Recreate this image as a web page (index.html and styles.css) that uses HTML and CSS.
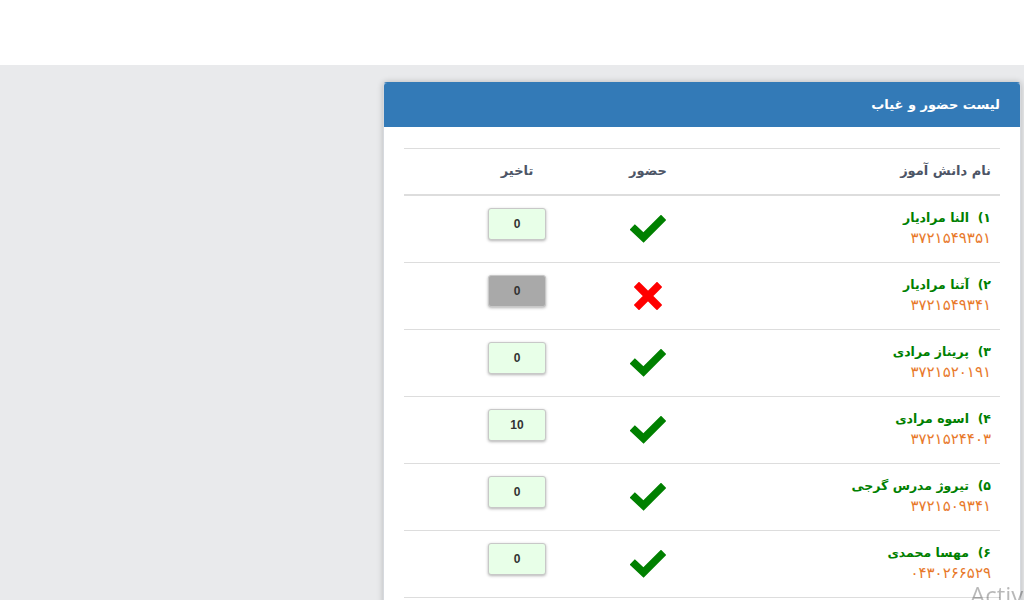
FILE: index.html
```html
<!DOCTYPE html>
<html lang="fa" dir="rtl">
<head>
<meta charset="UTF-8">
<meta name="viewport" content="width=device-width, initial-scale=1.0">
<title>لیست حضور و غیاب</title>
<link rel="stylesheet" href="styles.css">
</head>
<body>

<div class="topbar"></div>

<div class="main">
    <div class="panel">
        <div class="panel-heading">لیست حضور و غیاب</div>
        <div class="panel-body">
            <div class="table">
                <div class="row head">
                    <div class="cell name">نام دانش آموز</div>
                    <div class="cell mid">حضور</div>
                    <div class="cell mid">تاخیر</div>
                    <div class="cell"></div>
                </div>

                <div class="row">
                    <div class="cell name">
                        <div class="student">۱)&nbsp; النا مرادیار</div>
                        <div class="code">۳۷۲۱۵۴۹۳۵۱</div>
                    </div>
                    <div class="cell mid icon"><svg class="ok" viewBox="0 0 36 28"><polyline points="5,14.5 13.5,22.5 31,5"/></svg></div>
                    <div class="cell mid"><input class="delay" type="text" value="0" readonly></div>
                    <div class="cell"></div>
                </div>

                <div class="row">
                    <div class="cell name">
                        <div class="student">۲)&nbsp; آتنا مرادیار</div>
                        <div class="code">۳۷۲۱۵۴۹۳۴۱</div>
                    </div>
                    <div class="cell mid icon"><svg class="no" viewBox="0 0 28 28"><path d="M5 5L23 23M23 5L5 23"/></svg></div>
                    <div class="cell mid"><input class="delay off" type="text" value="0" disabled></div>
                    <div class="cell"></div>
                </div>

                <div class="row">
                    <div class="cell name">
                        <div class="student">۳)&nbsp; پریناز مرادی</div>
                        <div class="code">۳۷۲۱۵۲۰۱۹۱</div>
                    </div>
                    <div class="cell mid icon"><svg class="ok" viewBox="0 0 36 28"><polyline points="5,14.5 13.5,22.5 31,5"/></svg></div>
                    <div class="cell mid"><input class="delay" type="text" value="0" readonly></div>
                    <div class="cell"></div>
                </div>

                <div class="row">
                    <div class="cell name">
                        <div class="student">۴)&nbsp; اسوه مرادی</div>
                        <div class="code">۳۷۲۱۵۲۴۴۰۳</div>
                    </div>
                    <div class="cell mid icon"><svg class="ok" viewBox="0 0 36 28"><polyline points="5,14.5 13.5,22.5 31,5"/></svg></div>
                    <div class="cell mid"><input class="delay" type="text" value="10" readonly></div>
                    <div class="cell"></div>
                </div>

                <div class="row">
                    <div class="cell name">
                        <div class="student">۵)&nbsp; تیروژ مدرس گرجی</div>
                        <div class="code">۳۷۲۱۵۰۹۳۴۱</div>
                    </div>
                    <div class="cell mid icon"><svg class="ok" viewBox="0 0 36 28"><polyline points="5,14.5 13.5,22.5 31,5"/></svg></div>
                    <div class="cell mid"><input class="delay" type="text" value="0" readonly></div>
                    <div class="cell"></div>
                </div>

                <div class="row">
                    <div class="cell name">
                        <div class="student">۶)&nbsp; مهسا محمدی</div>
                        <div class="code">۰۴۳۰۲۶۶۵۲۹</div>
                    </div>
                    <div class="cell mid icon"><svg class="ok" viewBox="0 0 36 28"><polyline points="5,14.5 13.5,22.5 31,5"/></svg></div>
                    <div class="cell mid"><input class="delay" type="text" value="0" readonly></div>
                    <div class="cell"></div>
                </div>
            </div>
        </div>
    </div>
</div>

<div class="watermark" dir="ltr">Activate Windows</div>

</body>
</html>
```

FILE: styles.css
```css
html, body {
    margin: 0;
    padding: 0;
    overflow: hidden;
}

body {
    font-family: "DejaVu Sans", "Liberation Sans", sans-serif;
    font-size: 13px;
    background-color: #e9eaec;
}

.topbar {
    height: 65px;
    background-color: #ffffff;
}

.main {
    display: flex;
    padding: 17px 3px 0 0;
}

.panel {
    box-sizing: border-box;
    width: 638px;
    background-color: #fff;
    border: 1px solid #d6d9de;
    border-top-color: #337ab7;
    border-radius: 4px;
    box-shadow: 0 0 6px rgba(0, 0, 0, 0.22);
}

.panel-heading {
    height: 44px;
    line-height: 44px;
    padding: 0 20px;
    background-color: #337ab7;
    color: #fff;
    font-weight: bold;
    font-size: 13px;
    border-radius: 3px 3px 0 0;
}

.panel-body {
    padding: 21px 20px 40px 20px;
}

.table {
    border-top: 1px solid #ddd;
}

.row {
    display: grid;
    grid-template-columns: 299px 106px 156px 1fr;
    align-items: start;
    border-bottom: 1px solid #ddd;
    min-height: 66px;
}

.row.head {
    min-height: 0;
    border-bottom: 2px solid #ddd;
}

.cell {
    padding: 12px 9px;
}

.head .cell {
    padding: 12px 9px 13px 9px;
    line-height: 20px;
    font-weight: bold;
    color: #4d5566;
}

.mid {
    text-align: center;
}

.icon {
    align-self: center;
    padding: 0;
    height: 28px;
}

.student {
    color: #008000;
    font-weight: bold;
    font-size: 12.5px;
    line-height: 20px;
}

.code {
    color: #e8792b;
    font-size: 15px;
    line-height: 20px;
}

.ok {
    width: 36px;
    height: 28px;
}

.ok polyline {
    fill: none;
    stroke: #008000;
    stroke-width: 7.5;
    stroke-linejoin: miter;
    stroke-linecap: square;
}

.no {
    width: 28px;
    height: 28px;
}

.no path {
    fill: none;
    stroke: #ff0000;
    stroke-width: 7.5;
    stroke-linecap: square;
}

.delay {
    box-sizing: border-box;
    width: 58px;
    height: 32px;
    margin: 0;
    padding: 0;
    text-align: center;
    font-family: "Liberation Sans", Arial, sans-serif;
    font-size: 12px;
    font-weight: bold;
    color: #333;
    background-color: #e8ffe8;
    border: 1px solid #c8c8c8;
    border-radius: 3px;
    box-shadow: 0 1px 3px rgba(0, 0, 0, 0.3);
}

.delay.off {
    background-color: #a9a9a9;
}

.watermark {
    position: fixed;
    left: 970px;
    top: 578px;
    font-family: "Open Sans", "Liberation Sans", sans-serif;
    font-size: 24px;
    color: rgba(0, 0, 0, 0.28);
    white-space: nowrap;
}
```
